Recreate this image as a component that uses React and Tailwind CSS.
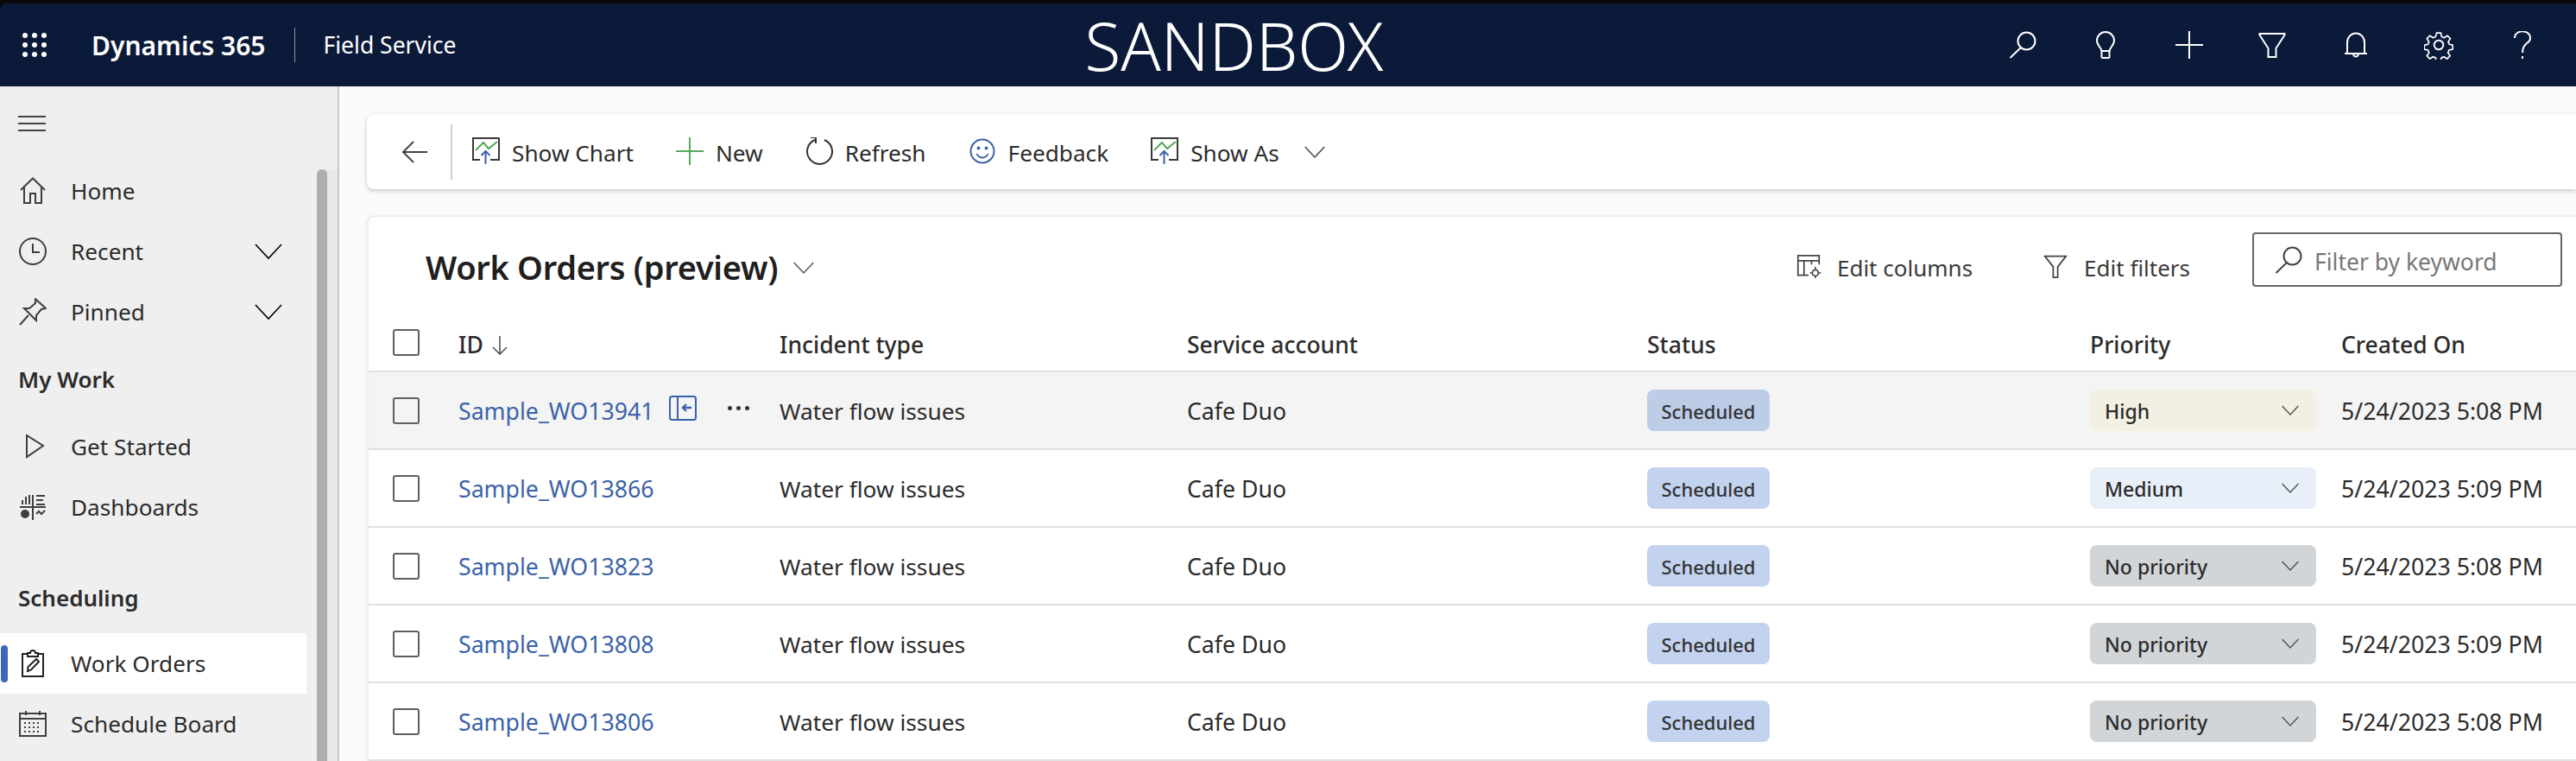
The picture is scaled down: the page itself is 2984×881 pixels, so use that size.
import React from "react";

const FONT = "font-['Noto_Sans','Open_Sans',sans-serif]";

// ---- icons (drawn at 32 box, the product's fabric glyphs are not in the icon packs)
function Glyph({ size = 32, stroke = "currentColor", w = 2, children, className = "" }) {
  return (
    <svg width={size} height={size} viewBox="0 0 32 32" fill="none" stroke={stroke} strokeWidth={w} className={`shrink-0 ${className}`}>
      {children}
    </svg>
  );
}

function Waffle() {
  const pts = [5, 16, 27];
  return (
    <svg width="32" height="32" viewBox="0 0 32 32" fill="#fff" className="shrink-0">
      {pts.map((y) => pts.map((x) => <circle key={`${x}-${y}`} cx={x} cy={y} r="3" />))}
    </svg>
  );
}

const Search = (p) => (
  <Glyph {...p}>
    <circle cx="20.5" cy="11.5" r="10" />
    <path d="M14 19 L1.5 31" />
  </Glyph>
);
const Bulb = () => (
  <Glyph>
    <path d="M11.5 23 C11 19 6 16 6 11 a10 10 0 0 1 20 0 c0 5 -5 8 -5.5 12 Z" />
    <path d="M11.5 23 V30 a1 1 0 0 0 1 1 h7 a1 1 0 0 0 1 -1 V23" />
  </Glyph>
);
const Plus = ({ stroke = "currentColor" }) => (
  <Glyph stroke={stroke}>
    <path d="M16 0 V32 M0 16 H32" />
  </Glyph>
);
const Funnel = (p) => (
  <Glyph {...p}>
    <path d="M1.5 3 H30.5 V4.5 L20.5 20 V30 H11.5 V20 L1.5 4.5 Z" />
  </Glyph>
);
const SlimFunnel = () => (
  <Glyph size={28} stroke="#444" w={2}>
    <path d="M2 3 H30 L19 17 V31 H13 V17 Z" />
  </Glyph>
);
const Bell = () => (
  <Glyph>
    <path d="M6 26 V13 a10 10.5 0 0 1 20 0 V26" />
    <path d="M3 26 H29" />
    <path d="M13 26 a3 3.5 0 0 0 6 0" />
  </Glyph>
);
const Gear = () => (
  <Glyph w={1.8} size={34}>
    <circle cx="16" cy="16" r="5" />
    <path d="M13.5 1.5 h5 l1 4.5 3 1.3 4 -2.5 3.5 3.5 -2.5 4 1.3 3 4.2 1 v5 l-4.5 1 -1.3 3 2.5 4 -3.5 3.5 -4 -2.5 -3 1.3 -1 4.4 h-5 l-1 -4.4 -3 -1.3 -4 2.5 -3.5 -3.5 2.5 -4 -1.3 -3 -4.4 -1 v-5 l4.4 -1 1.3 -3 -2.5 -4 3.5 -3.5 4 2.5 3 -1.3 z" transform="translate(1.6 1.6) scale(0.9)" />
  </Glyph>
);
const Help = () => (
  <Glyph>
    <path d="M7 8 a9 7.5 0 1 1 14 6 c-3 3 -5 5 -5 11" />
    <path d="M16 29 V32" />
  </Glyph>
);
const Chev = ({ size = 32, w = 1.6, className = "" }) => (
  <Glyph size={size} w={w} className={className}>
    <path d="M1 8 L16 24 L31 8" />
  </Glyph>
);
const ChartIcon = () => (
  <Glyph stroke="#3a3a3a" w={2}>
    <path d="M9 26 H1 V1 H31 V26 H21" />
    <path d="M4 15 L13 6 L19 13 L29 5" stroke="#56a85a" />
    <path d="M15.5 31 V16 M10.5 21 L15.5 16 L20.5 21" stroke="#3b62a8" />
  </Glyph>
);

const RefreshIcon = () => (
  <Glyph stroke="#333" w={2}>
    <path d="M11 3 A14.5 14.5 0 1 0 22 3" />
    <path d="M6 0 H12 V7" />
  </Glyph>
);
const Smile = () => (
  <Glyph stroke="#3b62a8" w={2}>
    <circle cx="16" cy="16" r="13.5" />
    <circle cx="11.5" cy="12.5" r="1" fill="#3b62a8" />
    <circle cx="20.5" cy="12.5" r="1" fill="#3b62a8" />
    <path d="M9.5 19 a7 7 0 0 0 13 0" />
  </Glyph>
);

const HomeIcon = () => (
  <Glyph stroke="#3f3f3f">
    <path d="M2 15 L16 1.5 L30 15" />
    <path d="M6 12 V30 H13 V19 H19 V30 H26 V12" />
  </Glyph>
);
const Clock = () => (
  <Glyph stroke="#3f3f3f">
    <circle cx="16" cy="16" r="15" />
    <path d="M16 7 V17 H24" />
  </Glyph>
);
const Pin = () => (
  <Glyph stroke="#3f3f3f">
    <path d="M19 1 L31 12 L26 13 L20 20 L20 26 L6 12 L12 12 L19 6 Z" />
    <path d="M11 20 L1 31" />
  </Glyph>
);
const Play = () => (
  <Glyph stroke="#3f3f3f" className="ml-[3px] mr-[-3px]">
    <path d="M6 3 L25 15 L6 28 Z" />
  </Glyph>
);
const Dash = () => (
  <Glyph stroke="#3f3f3f">
    <path d="M1 16 H31 M16 2 V31" />
    <path d="M4 13 V8 M8 13 V4 M12 13 V2 M20 3 H30 M20 8 H28 M20 13 H30" />
    <path d="M20 24 L23 21 L26 24 L30 20" />
    <circle cx="7" cy="24" r="4" fill="#3f3f3f" />
  </Glyph>
);
const Clipboard = () => (
  <Glyph stroke="#222">
    <path d="M11 5 H4 V31 H28 V5 H21" />
    <path d="M10 8 V4 H13 a3 3 0 0 1 6 0 H22 V8 Z" />
    <path d="M10 25 L10.5 20 L20 11 L23 14 L14 23.5 Z" />
  </Glyph>
);
const Calendar = () => (
  <Glyph stroke="#3f3f3f">
    <path d="M1 4 H31 V30 H1 Z M1 10 H31 M8 1 V6 M24 1 V6" />
    <path d="M6 15 H26 M6 20 H26 M6 25 H26" strokeDasharray="2 3" />
  </Glyph>
);
const Columns = () => (
  <Glyph size={28} stroke="#444" w={2}>
    <path d="M16 28 H2 V2 H30 V14 M2 9 H30 M10 9 V28 M20 9 V14" />
    <circle cx="25" cy="25" r="4" />
    <path d="M25 17 V20 M25 30 V32 M18 25 H20 M30 25 H32" />
  </Glyph>
);
const PaneIcon = () => (
  <Glyph stroke="#3b62a8" w={2}>
    <rect x="1" y="3" width="30" height="27" rx="2.5" />
    <path d="M10 3 V30" />
    <path d="M26 16 H16 M20 12 L16 16 L20 20" strokeWidth="2.4" />
  </Glyph>
);

// ---- data
const RECORDS = [
  { id: "Sample_WO13941", priority: "High", created: "5/24/2023 5:08 PM", hover: true },
  { id: "Sample_WO13866", priority: "Medium", created: "5/24/2023 5:09 PM" },
  { id: "Sample_WO13823", priority: "No priority", created: "5/24/2023 5:08 PM" },
  { id: "Sample_WO13808", priority: "No priority", created: "5/24/2023 5:09 PM" },
  { id: "Sample_WO13806", priority: "No priority", created: "5/24/2023 5:08 PM" },
];

const PRIORITY_BG = {
  High: "bg-[#f3f0e3]",
  Medium: "bg-[#e9eff9]",
  "No priority": "bg-[#d2d5d8]",
};

const GRID = "grid grid-cols-[104px_372px_472px_533px_513px_291px_1fr] items-center";

function NavItem({ icon, label, chevron, active }) {
  return (
    <div className={`relative flex h-[70px] w-[355px] items-center pl-[22px] ${active ? "bg-white" : ""}`}>
      {active && <span className="absolute left-[1px] top-[14px] h-[43px] w-[8px] rounded bg-[#3b67b8]" />}
      <span className="flex w-[60px] shrink-0">{icon}</span>
      <span className="flex-1 pt-[1px] text-[26.2px] text-[#2b2b2b]">{label}</span>
      {chevron && <Chev className="mr-[28px]" />}
    </div>
  );
}

function Sidebar() {
  return (
    <aside className="relative flex w-[393px] shrink-0 flex-col border-r-2 border-[#c9c9c9] bg-[#efefef]">
      <div className="flex h-[86px] shrink-0 items-center pl-[21px]">
        <svg width="32" height="20" viewBox="0 0 32 20" stroke="#444" strokeWidth="2"><path d="M0 2 H32 M0 10 H32 M0 18 H32" /></svg>
      </div>
      <NavItem icon={<HomeIcon />} label="Home" />
      <NavItem icon={<Clock />} label="Recent" chevron />
      <NavItem icon={<Pin />} label="Pinned" chevron />
      <div className="flex h-[86px] shrink-0 items-center pl-[21px] text-[26px] font-semibold text-[#2b2b2b]">My Work</div>
      <NavItem icon={<Play />} label="Get Started" />
      <NavItem icon={<Dash />} label="Dashboards" />
      <div className="mt-[30px] flex h-[81px] shrink-0 items-center pl-[21px] text-[26px] font-semibold text-[#2b2b2b]">Scheduling</div>
      <NavItem icon={<Clipboard />} label="Work Orders" active />
      <NavItem icon={<Calendar />} label="Schedule Board" />
      {/* scrollbar */}
      <div className="absolute bottom-0 right-0 top-[96px] w-[24px] bg-[#e8e8e8]">
        <div className="h-full w-[12px] rounded-t-full bg-[#adadad]" />
      </div>
    </aside>
  );
}

function CommandBar() {
  const Btn = ({ icon, label }) => (
    <div className="flex items-center gap-[14px]">
      {icon}
      <span className="pt-[4px] text-[26.2px] text-[#2b2b2b]">{label}</span>
    </div>
  );
  return (
    <div className="flex h-[88px] items-center rounded-l-lg bg-white pl-[40px] shadow-[0_2px_5px_rgba(0,0,0,0.2)]">
      <svg width="30" height="26" viewBox="0 0 30 26" fill="none" stroke="#444" strokeWidth="2" className="shrink-0">
        <path d="M30 13 H2 M14 1 L2 13 L14 25" />
      </svg>
      <span className="ml-[27px] mr-[23px] h-[64px] w-[2px] bg-[#d0d0d0]" />
      <div className="flex items-center gap-[49px]">
        <Btn icon={<ChartIcon />} label="Show Chart" />
        <Btn icon={<Plus stroke="#56a85a" />} label="New" />
        <Btn icon={<RefreshIcon />} label="Refresh" />
        <Btn icon={<Smile />} label="Feedback" />
        <Btn icon={<ChartIcon />} label="Show As" />
      </div>
      <Chev size={24} w={2} className="ml-[29px] text-[#444]" />
    </div>
  );
}

function Checkbox() {
  return <span className="ml-[28px] block h-[31px] w-[31px] rounded-[3px] border-2 border-[#5f5f5f]" />;
}

function Row({ rec }) {
  return (
    <div className={`${GRID} h-[90px] border-b-2 border-[#e0e0e0] text-[26.7px] text-[#2b2b2b] ${rec.hover ? "bg-[#f4f4f4]" : ""}`}>
      <Checkbox />
      <div className="relative pt-[3px] text-[#3b62a8]">
        {rec.id}
        {rec.hover && (
          <span className="absolute left-[244px] top-[3px] flex items-center text-[#3b62a8]">
            <PaneIcon />
            <span className="ml-[36px] flex gap-[5px]">
              <i className="h-[5px] w-[5px] rounded-full bg-[#333]" />
              <i className="h-[5px] w-[5px] rounded-full bg-[#333]" />
              <i className="h-[5px] w-[5px] rounded-full bg-[#333]" />
            </span>
          </span>
        )}
      </div>
      <div className="pt-[3px] text-[26.3px]">Water flow issues</div>
      <div className="pt-[3px]">Cafe Duo</div>
      <div>
        <span className={`flex h-[48px] w-[142px] items-center justify-center rounded-lg pt-[3px] text-[22px] font-medium text-[#333] ${rec.hover ? "bg-[#bdcde8]" : "bg-[#c3d3ef]"}`}>
          Scheduled
        </span>
      </div>
      <div>
        <span className={`flex h-[48px] w-[262px] items-center justify-between rounded-lg pl-[17px] pr-[20px] text-[23px] font-medium text-[#2b2b2b] ${PRIORITY_BG[rec.priority]}`}>
          <span className="pt-[3px]">{rec.priority}</span>
          <Chev size={20} w={2.4} className="text-[#555]" />
        </span>
      </div>
      <div className="pt-[3px]">{rec.created}</div>
    </div>
  );
}

function Grid() {
  const Head = ({ children }) => <div className="pt-[6px] font-medium">{children}</div>;
  return (
    <div className="mt-[32px] flex-1 rounded-tl-lg border-l-2 border-[#efefef] bg-white shadow-[0_-1px_3px_rgba(0,0,0,0.1)]">
      <div className="flex h-[113px] items-center pl-[66px] pr-[16px]">
        <div className="flex flex-1 items-center">
          <span className="pt-[3px] text-[38px] font-semibold tracking-[-0.3px] text-[#1f1f1f]">Work Orders (preview)</span>
          <Chev size={24} w={2} className="ml-[18px] mt-[4px] text-[#555]" />
        </div>
        <div className="flex items-center gap-[19px] text-[26px] text-[#3a3a3a]">
          <Columns />
          <span className="pt-[5px]">Edit columns</span>
        </div>
        <div className="ml-[82px] flex items-center gap-[19px] text-[26px] text-[#3a3a3a]">
          <SlimFunnel />
          <span className="pt-[5px]">Edit filters</span>
        </div>
        <div className="mb-[14px] ml-[72px] flex h-[63px] w-[359px] items-center gap-[14px] rounded border-2 border-[#666] pl-[24px] text-[26.5px] text-[#777]">
          <Search stroke="#444" />
          <span className="pt-[7px]">Filter by keyword</span>
        </div>
      </div>
      <div className={`${GRID} h-[67px] border-b-2 border-[#e0e0e0] text-[26.5px] text-[#2b2b2b]`}>
        <Checkbox />
        <Head>
          <span className="flex items-center gap-[10px]">
            ID
            <svg width="18" height="22" viewBox="0 0 18 22" fill="none" stroke="#555" strokeWidth="1.6"><path d="M9 0 V21 M1 13 L9 21 L17 13" /></svg>
          </span>
        </Head>
        <Head>Incident type</Head>
        <Head>Service account</Head>
        <Head>Status</Head>
        <Head>Priority</Head>
        <Head>Created On</Head>
      </div>
      {RECORDS.map((r) => (
        <Row key={r.id} rec={r} />
      ))}
    </div>
  );
}

export default function App() {
  return (
    <div className={`flex h-[881px] w-[2984px] flex-col overflow-hidden bg-[#0a0a0a] pt-[4px] ${FONT}`}>
      <header className="flex h-[96px] shrink-0 items-center rounded-tl-lg bg-[#0c1a3a] text-white">
        <div className="ml-[24px]"><Waffle /></div>
        <span className="ml-[50px] text-[30px] font-semibold">Dynamics 365</span>
        <span className="ml-[33px] h-[40px] w-[1px] bg-[#8a93a6]" />
        <span className="ml-[33px] pt-[2px] text-[26.5px]">Field Service</span>
        <span className="ml-[728px] text-[76.5px] font-light leading-none">SANDBOX</span>
        <div className="ml-auto mr-[14px] flex items-center">
          {[<Search />, <Bulb />, <Plus />, <Funnel />, <Bell />, <Gear />, <Help />].map((icon, i) => (
            <span key={i} className="flex w-[96.5px] justify-center">{icon}</span>
          ))}
        </div>
      </header>
      <div className="flex min-h-0 flex-1">
        <Sidebar />
        <main className="flex min-w-0 flex-1 flex-col bg-[#fafafa] pl-[32px] pt-[32px]">
          <CommandBar />
          <Grid />
        </main>
      </div>
    </div>
  );
}
